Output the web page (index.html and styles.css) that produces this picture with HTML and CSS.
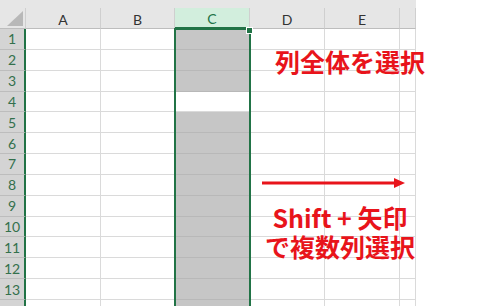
FILE: index.html
```html
<!DOCTYPE html>
<html lang="ja">
<head>
    <meta charset="UTF-8">
    <meta name="viewport" content="width=device-width, initial-scale=1.0">
    <title>列全体を選択</title>
    <link rel="stylesheet" href="styles.css">
</head>
<body>
    <div class="page">
        <div class="sheet" id="sheet">
            <!-- cells are built by the script below -->
        </div>
        <div class="selection"><span class="handle"></span></div>

        <div class="note note-top">列全体を選択</div>
        <svg class="arrow" width="146" height="14" viewBox="0 0 146 14">
            <line x1="0" y1="7" x2="134" y2="7" stroke="#e8141b" stroke-width="3"/>
            <polygon points="132,2 143,7 132,12" fill="#e8141b"/>
        </svg>
        <div class="note note-bottom">
            <div class="line">Shift + 矢印</div>
            <div class="line">で複数列選択</div>
        </div>
    </div>

    <script>
        const sheet = document.getElementById("sheet");
        const columns = ["A", "B", "C", "D", "E", ""];
        const numRows = 14;
        const labelledRows = 13; // last row is cut off by the window
        const selectedCol = 2;   // C
        const activeRow = 4;

        function addCell(className, text) {
            const cell = document.createElement("div");
            cell.className = className;
            if (text) cell.textContent = text;
            sheet.appendChild(cell);
        }

        // strip above the headers
        addCell("topbar");

        // header row
        addCell("corner");
        columns.forEach((name, i) => {
            addCell(i === selectedCol ? "col-head selected" : "col-head", name);
        });

        // body rows
        for (let r = 1; r <= numRows; r++) {
            addCell("row-head", r <= labelledRows ? String(r) : "");
            columns.forEach((name, i) => {
                let cls = "cell";
                if (i === selectedCol) cls += r === activeRow ? " active" : " picked";
                addCell(cls);
            });
        }
    </script>
</body>
</html>
```

FILE: styles.css
```css
body {
    margin: 0;
    background: #ffffff;
    font-family: Lato, "Open Sans", sans-serif;
    overflow: hidden;
}

.page {
    position: relative;
    width: 500px;
    height: 306px;
}

.sheet {
    display: grid;
    grid-template-columns: 26px 75px 74px 75px 75px 75px 16px;
    grid-template-rows: 8px 21px repeat(14, 20.85px);
    width: 416px;
}

.topbar {
    grid-column: 1 / -1;
    background: #e6e6e6;
}

.corner {
    position: relative;
    background: #e6e6e6;
    border-right: 1px solid #cfcfcf;
    border-bottom: 1px solid #bdbdbd;
    box-sizing: border-box;
}

.corner::after {
    content: "";
    position: absolute;
    right: 2px;
    bottom: 2px;
    border-style: solid;
    border-width: 0 0 15px 16px;
    border-color: transparent transparent #b8b8b8 transparent;
}

.col-head {
    background: #e6e6e6;
    border-right: 1px solid #cfcfcf;
    border-bottom: 1px solid #bdbdbd;
    box-sizing: border-box;
    display: flex;
    justify-content: center;
    align-items: center;
    font-size: 14px;
    color: #333333;
    padding-top: 2px;
}

.col-head.selected {
    background: #d2eedd;
    color: #217346;
    border-bottom: 2px solid #217346;
}

.row-head {
    background: #d4d4d4;
    border-right: 2px solid #217346;
    border-bottom: 1px solid #bdbdbd;
    box-sizing: border-box;
    display: flex;
    justify-content: center;
    align-items: center;
    font-size: 14px;
    color: #33704c;
}

.cell {
    border-right: 1px solid #dadada;
    border-bottom: 1px solid #dadada;
    box-sizing: border-box;
    background: #ffffff;
}

.cell.picked {
    background: #c6c6c6;
    border-bottom-color: #b8b8b8;
}

.cell.active {
    background: #ffffff;
}

/* green outline round the selected column */
.selection {
    position: absolute;
    left: 174px;
    top: 28px;
    width: 77px;
    height: 290px;
    border: 2px solid #217346;
    box-sizing: border-box;
}

.handle {
    position: absolute;
    right: -4px;
    top: -3px;
    width: 5px;
    height: 5px;
    background: #217346;
    border: 1px solid #ffffff;
}

.note {
    position: absolute;
    color: #e8141b;
    font-family: "Noto Sans CJK JP", "Noto Sans", sans-serif;
    font-weight: bold;
    font-size: 25px;
    line-height: 25px;
    white-space: nowrap;
}

.note-top {
    left: 275px;
    top: 49px;
}

.arrow {
    position: absolute;
    left: 262px;
    top: 176px;
}

.note-bottom {
    left: 260px;
    top: 205px;
    width: 160px;
    text-align: center;
    display: flex;
    flex-direction: column;
    gap: 4px;
}

.note-bottom .line {
    height: 25px;
}
```
